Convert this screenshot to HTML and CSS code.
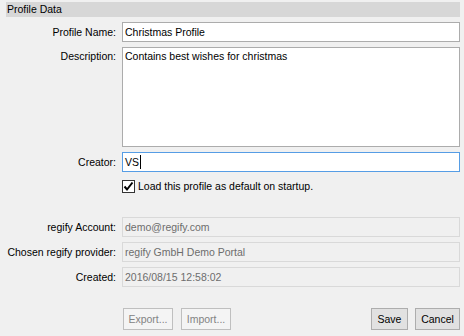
FILE: index.html
```html
<html>
<head>
	<link rel="stylesheet" href="styles.css">
</head>
<body>
	<div class="panel">
		<div class="title">Profile Data</div>
		<div class="form">
			<div class="row r-name">
				<div class="label">Profile Name:</div>
				<div class="field">Christmas Profile</div>
			</div>
			<div class="row r-desc">
				<div class="label">Description:</div>
				<div class="field area">Contains best wishes for christmas</div>
			</div>
			<div class="row r-creator">
				<div class="label">Creator:</div>
				<div class="field focus">VS<span class="caret"></span></div>
			</div>
			<div class="row r-check">
				<div class="label"></div>
				<div class="check">
					<span class="box">
						<svg width="11" height="11" viewBox="0 0 11 11"><path d="M1.5 5.5 L4 8.5 L9.5 1.5" fill="none" stroke="#000" stroke-width="2"/></svg>
					</span>
					<span>Load this profile as default on startup.</span>
				</div>
			</div>
			<div class="row r-account">
				<div class="label">regify Account:</div>
				<div class="field off">demo@regify.com</div>
			</div>
			<div class="row r-provider">
				<div class="label">Chosen regify provider:</div>
				<div class="field off">regify GmbH Demo Portal</div>
			</div>
			<div class="row r-created">
				<div class="label">Created:</div>
				<div class="field off">2016/08/15 12:58:02</div>
			</div>
		</div>
		<div class="buttons">
			<div class="btn off w50">Export...</div>
			<div class="btn off w50">Import...</div>
			<div class="spacer"></div>
			<div class="btn save">Save</div>
			<div class="btn cancel">Cancel</div>
		</div>
	</div>
</body>
</html>
```
FILE: styles.css
```css
html, body {
	margin: 0;
	background: #f0f0f0;
	font-family: "Liberation Sans", Arial, sans-serif;
	font-size: 10.5px;
	color: #000;
}
.panel {
	width: 464px;
	height: 336px;
	padding-top: 2px;
	box-sizing: border-box;
}
.title {
	margin: 0 4px 0 6px;
	height: 15px;
	line-height: 14px;
	padding-left: 1px;
	background: #d7d7d7;
}
.row {
	display: flex;
	margin-top: 5px;
}
.label {
	width: 116px;
	flex: none;
	text-align: right;
	line-height: 20px;
	white-space: nowrap;
}
.field {
	margin-left: 6px;
	width: 338px;
	height: 20px;
	box-sizing: border-box;
	border: 1px solid #acacac;
	background: #fff;
	padding: 0 2px;
	line-height: 18px;
	white-space: nowrap;
	overflow: hidden;
}
.field.area {
	height: 100px;
	padding-top: 1px;
	line-height: 14px;
	white-space: normal;
}
.r-desc .label {
	line-height: 16px;
	padding-top: 1px;
}
.field.focus {
	border-color: #569de5;
}
.caret {
	display: inline-block;
	width: 1px;
	height: 14px;
	margin-left: 1px;
	background: #000;
	vertical-align: -3px;
}
.field.off {
	background: #f0f0f0;
	border-color: #d9d9d9;
	color: #6d6d6d;
}
.r-creator { margin-top: 5px; }
.r-check { margin-top: 8px; height: 13px; }
.check {
	margin-left: 6px;
	display: flex;
	align-items: center;
	gap: 3px;
	line-height: 13px;
}
.box {
	width: 13px;
	height: 13px;
	box-sizing: border-box;
	border: 1px solid #333;
	background: #fff;
	display: flex;
	align-items: center;
	justify-content: center;
}
.box svg { display: block; }
.r-account { margin-top: 24px; }
.buttons {
	display: flex;
	margin: 21px 4px 0 123px;
	gap: 8px;
}
.spacer { flex: auto; }
.btn {
	height: 22px;
	box-sizing: border-box;
	border: 1px solid #adadad;
	background: #e1e1e1;
	line-height: 20px;
	text-align: center;
}
.btn.off {
	border-color: #bfbfbf;
	background: #f4f4f4;
	color: #838383;
}
.w50 { width: 50px; }
.save { width: 37px; margin-right: -1px; }
.cancel { width: 45px; }
```
